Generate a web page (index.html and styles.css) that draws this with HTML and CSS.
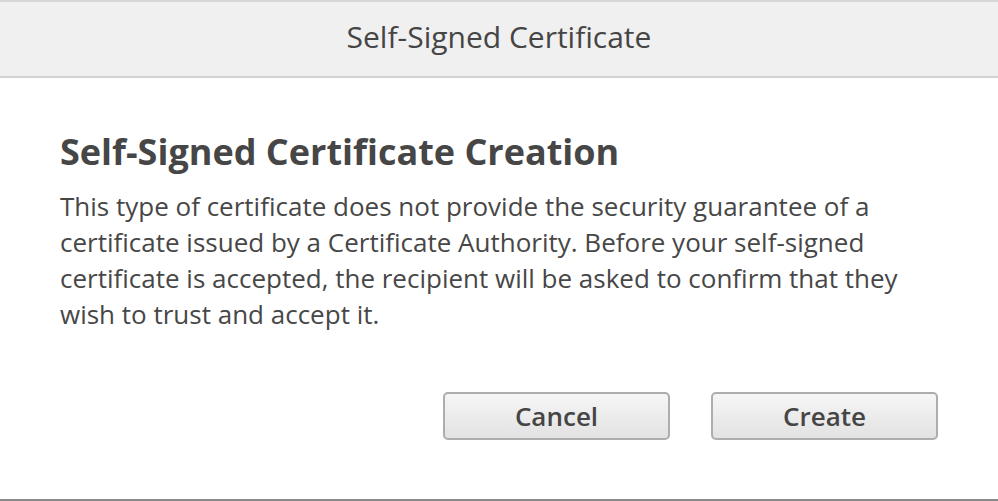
FILE: index.html
```html
<!DOCTYPE html>
<html lang="en">
<head>
  <meta charset="UTF-8" />
  <title>Self-Signed Certificate</title>
  <link rel="stylesheet" href="styles.css">
</head>
<body>
  <div class="dialog">
    <header class="dialog-head">Self-Signed Certificate</header>
    <section class="dialog-body">
      <h2>Self-Signed Certificate Creation</h2>
      <p>This type of certificate does not provide the security guarantee of a certificate issued by a Certificate Authority. Before your self-signed certificate is accepted, the recipient will be asked to confirm that they wish to trust and accept it.</p>
      <div class="actions">
        <button type="button">Cancel</button>
        <button type="button">Create</button>
      </div>
    </section>
  </div>
</body>
</html>
```

FILE: styles.css
```css
html, body {
  margin: 0;
  padding: 0;
  background: #fff;
}
body {
  font-family: "Open Sans", "Noto Sans", sans-serif;
  color: #454545;
}
.dialog {
  width: 998px;
  height: 501px;
  box-sizing: border-box;
  border-bottom: 2px solid #8a8a8a;
  display: flex;
  flex-direction: column;
}
.dialog-head {
  height: 78px;
  box-sizing: border-box;
  border-top: 2px solid #d6d6d6;
  border-bottom: 2px solid #d2d2d2;
  background: #f0f0f0;
  text-align: center;
  font-size: 30px;
  font-weight: 400;
  line-height: 70px;
  color: #454545;
}
.dialog-body {
  padding: 0 60px;
  flex: 1;
}
.dialog-body h2 {
  margin: 50px 0 0;
  font-size: 36px;
  font-weight: 700;
  line-height: 48px;
  color: #464646;
}
.dialog-body p {
  margin: 12px 0 0;
  font-size: 26px;
  line-height: 36px;
  color: #474747;
  max-width: 860px;
}
.actions {
  display: flex;
  justify-content: flex-end;
  gap: 41px;
  margin-top: 60px;
}
.actions button {
  width: 227px;
  height: 48px;
  border: 2px solid #adadad;
  border-radius: 5px;
  background: linear-gradient(#f6f6f6, #e2e2e2);
  font-family: inherit;
  font-size: 26px;
  font-weight: 600;
  color: #454545;
  padding: 0;
}
```
